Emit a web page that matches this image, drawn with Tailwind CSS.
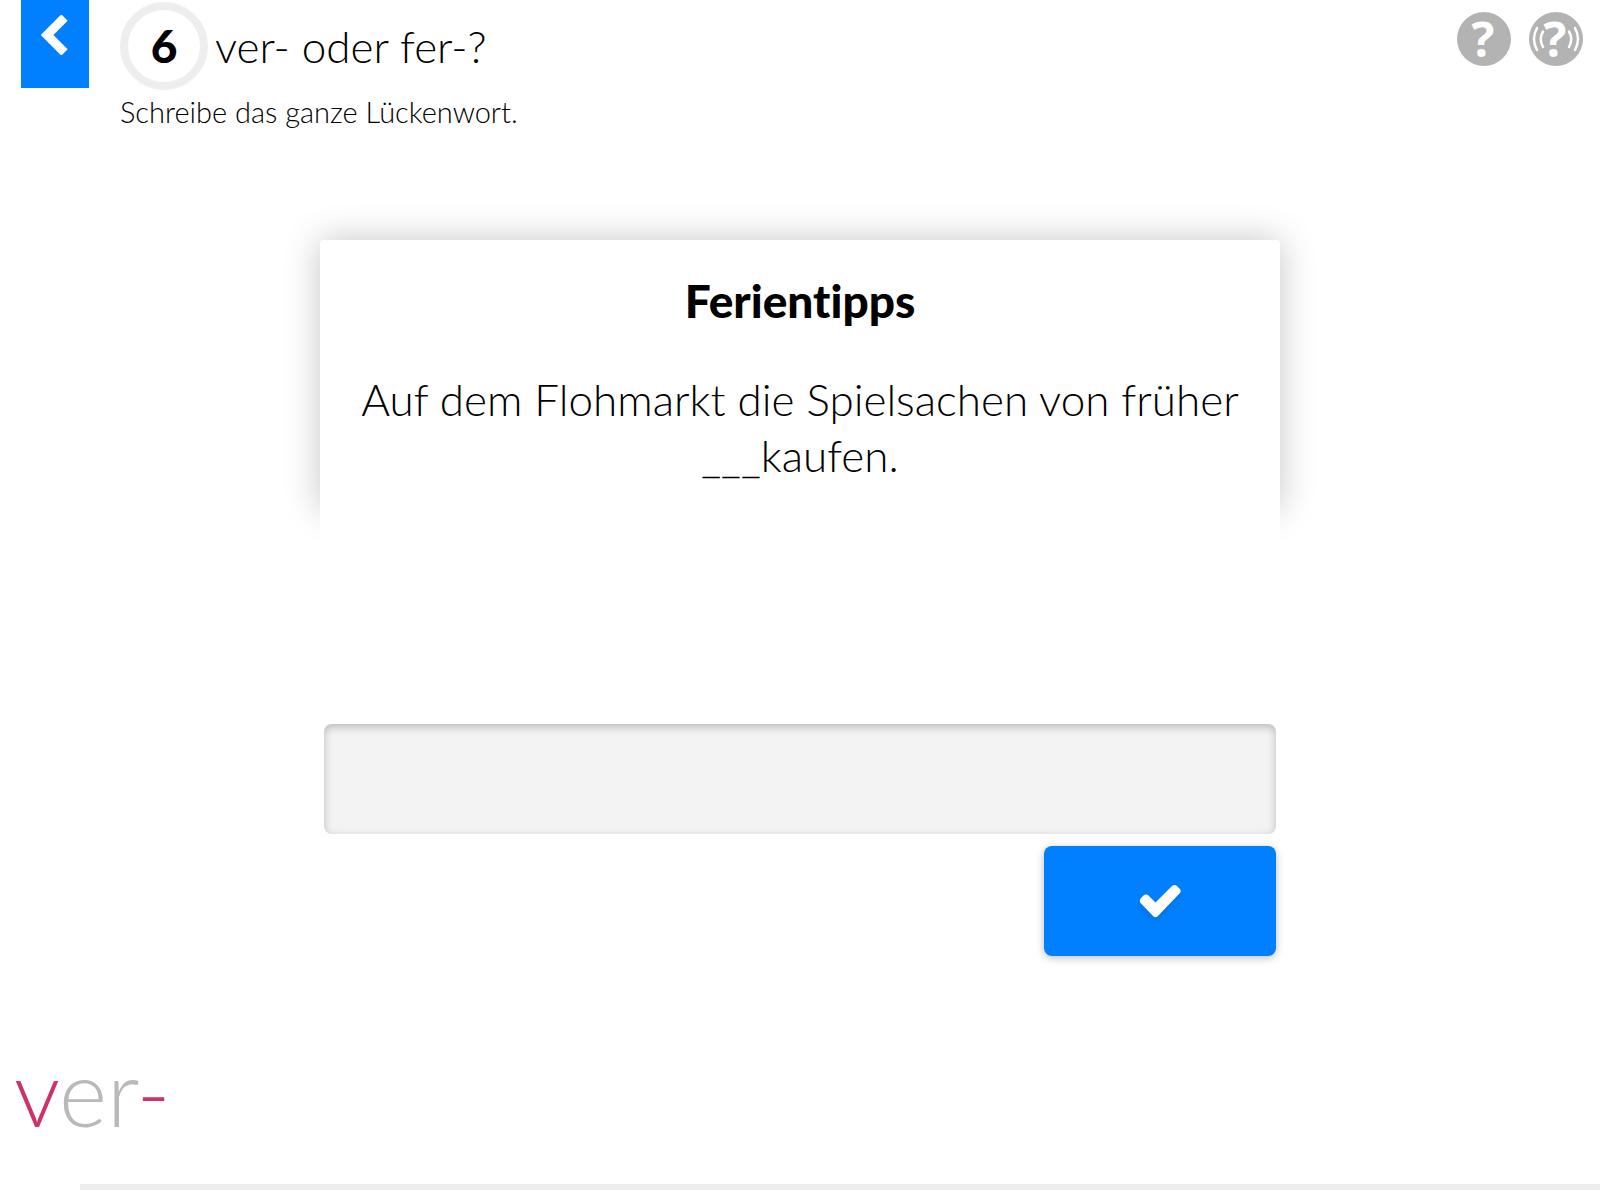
<!DOCTYPE html>
<html lang="de">
<head>
  <meta charset="UTF-8" />
  <meta name="viewport" content="width=device-width, initial-scale=1.0" />
  <title>ver- oder fer-?</title>
  <script src="https://cdn.jsdelivr.net/npm/@tailwindcss/browser@4"></script>
</head>
<body class="bg-white text-black min-h-screen flex flex-col font-['Lato','Open_Sans',sans-serif] font-light [font-variant-ligatures:none]">

  <!-- Kopfzeile -->
  <header class="flex items-start pl-[21px] pr-[17px]">
    <button type="button" aria-label="Zurück" class="w-[68px] h-[88px] bg-[#0080ff] shrink-0 flex justify-center pt-[15px]">
      <svg class="w-7 h-10" viewBox="0 0 28 40" fill="none" stroke="#fff" stroke-width="9">
        <path d="M23.5 2.500L6 20l17.500 17.500" />
      </svg>
    </button>
    <div class="ml-[31px] pt-0.5 grow">
      <div class="flex items-center gap-[7px]">
        <span class="w-[88px] h-[88px] rounded-full border-8 border-[#eee] flex items-center justify-center text-[46px] leading-[54px] font-black">6</span>
        <h1 class="text-[44px] leading-[56px]">ver- oder fer-?</h1>
      </div>
      <p class="mt-0.5 text-[29px] leading-10">Schreibe das ganze Lückenwort.</p>
    </div>
    <nav class="flex gap-[18px] pt-3">
      <button type="button" aria-label="Hilfe">
        <svg class="w-[54px] h-[54px] overflow-visible" viewBox="0 0 54 54">
          <circle cx="27" cy="27" r="27" fill="#b3b3b3" />
          <text x="26" y="45" text-anchor="middle" fill="#fff" class="font-['Open_Sans'] font-bold text-[48px]">?</text>
        </svg>
      </button>
      <button type="button" aria-label="Hilfe vorlesen">
        <svg class="w-[54px] h-[54px] overflow-visible" viewBox="0 0 54 54">
          <circle cx="27" cy="27" r="27" fill="#b3b3b3" />
          <text x="26" y="45" text-anchor="middle" fill="#fff" class="font-['Open_Sans'] font-bold text-[48px]">?</text>
          <g fill="none" stroke="#fff" stroke-width="2.500" stroke-linecap="round">
            <path d="M8 16Q2 27 8 38M14 19.500Q9.500 27 14 35M40 19.500Q44.500 27 40 35M46 16Q52 27 46 38" />
          </g>
        </svg>
      </button>
    </nav>
  </header>

  <!-- Aufgabe -->
  <main class="w-3/5 mx-auto mt-[108px]">
    <section class="h-[270px] rounded-sm shadow-[0_0_36px_rgba(0,0,0,0.23)]">
      <div class="h-[340px] bg-white rounded-sm pt-[33px] px-10 text-center text-[44px] leading-[56px]">
        <h2 class="font-black text-[46px] leading-[56px]">Ferientipps</h2>
        <p class="mt-[42px]">Auf dem Flohmarkt die Spielsachen von früher ___kaufen.</p>
      </div>
    </section>
    <form class="mt-[214px] px-1 flex flex-col items-end gap-3">
      <input type="text" aria-label="Lückenwort" class="w-full h-[110px] rounded-lg bg-[#f3f3f3] px-6 text-[44px] outline-none shadow-[inset_0_3px_8px_rgba(0,0,0,0.24)]" />
      <button type="submit" aria-label="Prüfen" class="w-[232px] h-[110px] rounded-lg bg-[#0080ff] flex items-center justify-center shadow-[0_2px_8px_rgba(0,0,0,0.25)]">
        <svg class="w-[42px] h-[34px] drop-shadow-md" viewBox="0 0 42 34" fill="#fff">
          <path d="M2 14L4.500 11.500Q7 9.500 9.500 11.500L16.500 18.500L33 2Q35.500 0 38 2L40.500 4.500Q43 7 40.500 9.500L18.500 32.500Q16.500 34 14.500 32.500L2 19.500Q-0.500 17 2 14Z" />
        </svg>
      </button>
    </form>
  </main>

  <!-- Fortschritt -->
  <footer class="mt-auto pb-2.5">
    <p class="pl-3.5 mb-8 text-[92px] leading-[120px] text-[#bab8ba]"><span class="text-[#cc3366]">v</span>er<span class="text-[#cc3366]">-</span></p>
    <div class="ml-20 h-1.5 bg-[#eee]"></div>
  </footer>

</body>
</html>
